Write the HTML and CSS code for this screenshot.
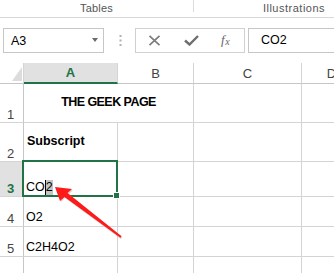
FILE: index.html
```html
<!DOCTYPE html>
<html>
<head>
<meta charset="utf-8">
<link rel="stylesheet" href="styles.css">
</head>
<body>
<div class="page">
  <div class="ribbon">
    <div class="group g1">Tables</div>
    <div class="rsep"></div>
    <div class="group g2">Illustrations</div>
  </div>
  <div class="fbar">
    <div class="namebox"><span>A3</span><span class="dd"></span></div>
    <div class="dots">
      <svg width="3" height="11" viewBox="0 0 3 11"><rect x="0.5" y="0" width="2" height="2" fill="#b0b0b0"/><rect x="0.5" y="4.5" width="2" height="2" fill="#b0b0b0"/><rect x="0.5" y="9" width="2" height="2" fill="#b0b0b0"/></svg>
    </div>
    <div class="fbtns">
      <svg class="ic" width="13" height="11" viewBox="0 0 13 11"><path d="M1.5 0.8 L11.5 10.2 M11.5 0.8 L1.5 10.2" stroke="#7a7a7a" stroke-width="1.6" fill="none"/></svg>
      <svg class="ic" width="15" height="11" viewBox="0 0 15 11"><path d="M1 5.5 L5.5 9.5 L14 1" stroke="#6e6e6e" stroke-width="2.4" fill="none"/></svg>
      <span class="fx">f<sub>x</sub></span>
    </div>
    <div class="finput">CO2</div>
  </div>
  <div class="grid">
    <div class="c hd corner"><span class="tri"></span></div>
    <div class="c hd colsel">A</div>
    <div class="c hd">B</div>
    <div class="c hd">C</div>
    <div class="c hd">D</div>

    <div class="c rh">1</div>
    <div class="c mid title">THE GEEK PAGE</div>
    <div class="c"></div>
    <div class="c"></div>

    <div class="c rh">2</div>
    <div class="c mid bold">Subscript</div>
    <div class="c"></div>
    <div class="c"></div>
    <div class="c"></div>

    <div class="c rh rsel">3</div>
    <div class="c txt active">CO<span class="cur">2</span><span class="selbox"><span class="handle"></span></span></div>
    <div class="c"></div>
    <div class="c"></div>
    <div class="c"></div>

    <div class="c rh">4</div>
    <div class="c txt">O2</div>
    <div class="c"></div>
    <div class="c"></div>
    <div class="c"></div>

    <div class="c rh">5</div>
    <div class="c txt">C2H4O2</div>
    <div class="c"></div>
    <div class="c"></div>
    <div class="c"></div>

    <div class="c rh">6</div>
    <div class="c"></div>
    <div class="c"></div>
    <div class="c"></div>
    <div class="c"></div>
  </div>
  <svg class="arrow" width="334" height="273" viewBox="0 0 334 273">
    <polygon points="56,188 73,190 69,194 122,237 121,239 65,198 61,202" fill="#b8b8b8" opacity="0.6"/>
    <polygon points="55,187 72,189 67.5,193 121.6,236.2 120.4,237.8 64.5,197 60,201" fill="#ff1a1a"/>
  </svg>
</div>
</body>
</html>
```
FILE: styles.css
```css
html, body {
  margin: 0;
  padding: 0;
  background: #ffffff;
}
.page {
  position: relative;
  width: 334px;
  height: 273px;
  overflow: hidden;
  font-family: "Liberation Sans", Arial, sans-serif;
  color: #000;
}
.ribbon {
  display: flex;
  height: 17px;
  border-bottom: 1px solid #d8d8d8;
  white-space: nowrap;
}
.group {
  font-size: 11px;
  color: #555;
  line-height: 17px;
  text-align: center;
  letter-spacing: 0.2px;
  flex: none;
}
.g1 { width: 193px; }
.g2 { width: 200px; letter-spacing: 0.5px; }
.rsep {
  flex: none;
  width: 1px;
  height: 12px;
  background: #dcdcdc;
}
.fbar {
  display: flex;
  align-items: flex-start;
  margin-top: 10px;
  height: 25px;
  padding-left: 3px;
}
.namebox {
  flex: none;
  box-sizing: border-box;
  width: 101px;
  height: 25px;
  border: 1px solid #c6c6c6;
  display: flex;
  align-items: center;
  justify-content: space-between;
  padding: 0 5px 0 7px;
  font-size: 12.5px;
}
.dd {
  width: 0;
  height: 0;
  border-left: 3.5px solid transparent;
  border-right: 3.5px solid transparent;
  border-top: 4px solid #6a6a6a;
  margin-bottom: 1px;
}
.dots {
  flex: none;
  width: 31px;
  height: 25px;
  display: flex;
  align-items: center;
  justify-content: center;
  padding-left: 0;
  box-sizing: border-box;
}
.dots svg { display: block; margin-left: 1px; }
.fbtns {
  flex: none;
  box-sizing: border-box;
  width: 110px;
  height: 25px;
  border: 1px solid #d0d0d0;
  display: flex;
  align-items: center;
  padding-left: 12px;
}
.ic { display: block; flex: none; }
.ic:nth-child(2) { margin-left: 23px; }
.fx {
  margin-left: 22px;
  font-family: "Liberation Serif", "Times New Roman", serif;
  font-style: italic;
  font-size: 13px;
  color: #666;
  line-height: 13px;
}
.fx sub {
  font-size: 10px;
  vertical-align: -1px;
  margin-left: 0.5px;
}
.finput {
  flex: none;
  box-sizing: border-box;
  margin-left: 3px;
  width: 120px;
  height: 25px;
  border: 1px solid #c6c6c6;
  padding-left: 12px;
  font-size: 12.5px;
  line-height: 23px;
}
.grid {
  margin-top: 10px;
  display: grid;
  grid-template-columns: 24px 94px 76px 108px 60px;
  grid-template-rows: 21px 39px 39px 35px 30px 30px 30px;
  font-size: 12.5px;
}
.c {
  box-sizing: border-box;
  border-right: 1px solid #d4d4d4;
  border-bottom: 1px solid #d4d4d4;
  line-height: 15px;
  white-space: nowrap;
  display: flex;
  align-items: flex-end;
}
.hd {
  align-items: center;
  justify-content: center;
  font-size: 13px;
  color: #444;
  border-bottom-color: #c6c6c6;
  border-right-color: #d4d4d4;
}
.corner {
  position: relative;
  justify-content: flex-end;
  align-items: flex-end;
  padding: 0 1px 2px 0;
}
.tri {
  width: 0;
  height: 0;
  border-left: 10px solid transparent;
  border-bottom: 14px solid #dcdcdc;
}
.colsel {
  background: #e1e1e1;
  color: #217346;
  font-weight: bold;
  border-bottom: 2px solid #217346;
}
.rh {
  justify-content: center;
  padding-right: 2px;
  font-size: 13px;
  color: #444;
  border-right-color: #c6c6c6;
}
.rsel {
  background: #e1e1e1;
  color: #217346;
  font-weight: bold;
}
.mid {
  align-items: center;
  padding-left: 3px;
  padding-bottom: 1px;
}
.title {
  grid-column: span 2;
  justify-content: center;
  font-weight: bold;
  letter-spacing: -0.55px;
  padding-left: 0;
}
.bold {
  font-weight: bold;
}
.txt {
  padding-left: 2px;
  padding-bottom: 1px;
}
.active {
  position: relative;
}
.cur {
  background: #c4c4c4;
  border-left: 1px solid #000;
  margin-left: 0;
  padding-right: 0;
}
.selbox {
  position: absolute;
  left: -2px;
  top: -2px;
  right: -1px;
  bottom: -1px;
  border: 2px solid #217346;
}
.handle {
  position: absolute;
  right: -4px;
  bottom: -4px;
  width: 5px;
  height: 5px;
  background: #217346;
  border: 1px solid #fff;
}
.arrow {
  position: absolute;
  left: 0;
  top: 0;
  pointer-events: none;
}
```
